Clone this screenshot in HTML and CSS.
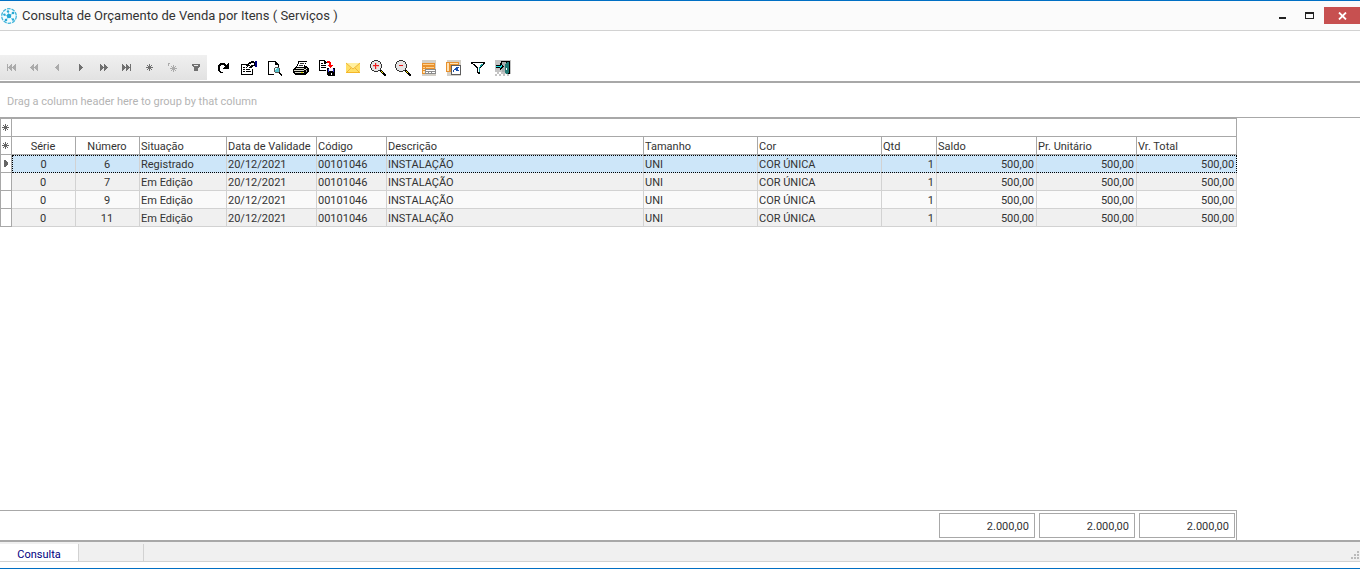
FILE: index.html
```html
<!DOCTYPE html>
<html lang="pt-BR">
<head>
<meta charset="UTF-8">
<meta name="viewport" content="width=device-width, initial-scale=1.0">
<title>Consulta de Orçamento de Venda por Itens ( Serviços )</title>
<link rel="stylesheet" href="styles.css">
</head>
<body>

<div class="window">
  <!-- Barra de título -->
  <header class="titlebar">
    <svg class="app-icon" viewBox="0 0 16 16" aria-hidden="true">
      <circle cx="8" cy="8" r="7.3" fill="#f3fcff" stroke="#3fb4da" stroke-width="1.3" stroke-dasharray="3.6 1"/>
      <path d="M8 8L7 3M8 8l4-3M8 8l4 4M8 8l-3 4M8 8L3 7" stroke="#8ed6ec" stroke-width="1"/>
      <g fill="#27a8d4">
        <circle cx="8" cy="8" r="2.3"/><circle cx="7" cy="3.4" r="1.2"/><circle cx="12" cy="5" r="1.3"/>
        <circle cx="12" cy="11.5" r="1.2"/><circle cx="5" cy="12" r="1.3"/><circle cx="3.4" cy="6.6" r="1.2"/>
      </g>
    </svg>
    <h1>Consulta de Orçamento de Venda por Itens ( Serviços )</h1>
    <div class="window-buttons">
      <button type="button" aria-label="Minimizar"><svg viewBox="0 0 9 8"><path d="M1 5h7v2H1z" fill="#222"/></svg></button>
      <button type="button" aria-label="Maximizar"><svg viewBox="0 0 9 8"><path d="M0 0h9v7H0zM1 2v4h7V2z" fill="#222" fill-rule="evenodd"/></svg></button>
      <button type="button" class="close-btn" aria-label="Fechar"><svg viewBox="0 0 9 8"><path d="M1 .5l7 7M8 .5l-7 7" stroke="#fff" stroke-width="1.8" shape-rendering="auto"/></svg></button>
    </div>
  </header>

  <!-- Barra de ferramentas -->
  <div class="toolbar">
    <div class="navigator">
      <button type="button" disabled aria-label="Primeiro"><svg viewBox="0 0 11 9"><path d="M1 1h1v7H1zM6 1v7L2 5V4zM10 1v7L6 5V4z"/></svg></button>
      <button type="button" disabled aria-label="Página anterior"><svg viewBox="0 0 11 9"><path d="M5 1v7L1 5V4zM9 1v7L5 5V4z"/></svg></button>
      <button type="button" disabled aria-label="Anterior"><svg viewBox="0 0 11 9"><path d="M7 1v7L3 5V4z"/></svg></button>
      <button type="button" aria-label="Próximo"><svg viewBox="0 0 11 9"><path d="M4 1v7l4-3V4z"/></svg></button>
      <button type="button" aria-label="Próxima página"><svg viewBox="0 0 11 9"><path d="M2 1v7l4-3V4zM6 1v7l4-3V4z"/></svg></button>
      <button type="button" aria-label="Último"><svg viewBox="0 0 11 9"><path d="M1 1v7l4-3V4zM5 1v7l4-3V4zM9 1h1v7H9z"/></svg></button>
      <button type="button" aria-label="Salvar marcador"><svg viewBox="0 0 11 9"><path d="M5 1h1v7H5zM2 4h7v1H2zM3 2h1v1h3V2h1v1H7v3h1v1H7V6H4v1H3V6h1V3H3z"/></svg></button>
      <button type="button" disabled aria-label="Ir para marcador"><svg viewBox="0 0 11 9"><path d="M1 0h2v1H2v2H1zM6 2h1v7H6zM3 5h7v1H3zM4 3h1v1h3V3h1v1H8v3h1v1H8V7H5v1H4V7h1V4H4z"/></svg></button>
      <button type="button" aria-label="Filtrar"><svg viewBox="0 0 11 9"><path d="M2 1h8v2L8 5v3H4V5L2 3zM4 2v1h4V2z" fill-rule="evenodd"/></svg></button>
    </div>

    <div class="tools">
      <button type="button" aria-label="Atualizar"><svg viewBox="0 0 16 16">
        <path d="M5 3h5v1h1v1h1V4h1V3h1v6H8V8h1V7h1V6H9V5H6v1H5v5h1v1h2v1H5v-1H4v-1H3V5h1V4h1z" fill="#000"/>
      </svg></button>
      <button type="button" aria-label="Propriedades"><svg viewBox="0 0 16 16">
        <path d="M0 4h7v1H1v9h10V9h1v6H0zM2 7h2v1H2zM2 9h2v1H2zM2 11h2v1H2zM5 11h5v1H5zM5 9h4v1H5zM5 7h1v1H5zM5 5h1V4h1V3h1V2h2V1h3v1h1v4h-2v1h-1v1H8V7h1V6H7v1H6V6H5z" fill="#000"/>
        <path d="M7 5h1V4h2V3h3v2h-3v1H9V5z" fill="#fff"/>
        <path d="M14 1h2v6h-2z" fill="#000080"/>
      </svg></button>
      <button type="button" aria-label="Visualizar"><svg viewBox="0 0 16 16">
        <path d="M1 1h8v1h1v1h1v1h1v3h-1V5H8V2H2v12h5v1H1z" fill="#000"/>
        <path d="M8 7h4v1h1v4h-1v1H8v-1H7V8h1z" fill="#555"/>
        <path d="M8 8h4v4H8z" fill="#56c5cc"/><path d="M9 8h1v1H9v1H8V8z" fill="#d9ffff"/>
        <path d="M12 12h1v1h1v1h1v2h-1v-1h-1v-1h-1z" fill="#000"/>
      </svg></button>
      <button type="button" aria-label="Imprimir"><svg viewBox="0 0 16 16">
        <path d="M5 1h9v1h-1v2h-1v2h2v1h1v1h1v4h-1v1h-1v1h-1v1H2v-1H1v-1H0V9h1V8h1V7h1V6h1V4h1z" fill="#000"/>
        <path d="M6 2h7v1h-1v2h-1v2H4V6h1V4h1z" fill="#fff"/>
        <path d="M7 3h4v1H7zM6 5h4v1H6z" fill="#333"/>
        <path d="M3 8h8v1H2v1h9V9h2V8h1v1h-1v1h-2v1H1v-1h1V9h1zM2 12h9v1H2z" fill="#d8d8c8"/>
        <path d="M8 12h2v1H8z" fill="#e5e500"/><path d="M13 10h1v2h-1z" fill="#aaa"/>
      </svg></button>
      <button type="button" aria-label="Exportar"><svg viewBox="0 0 16 16">
        <path d="M0 0h6v1h1v1h1v1H7v1H5V1H1v9h6v1H0zM2 3h2v1H2zM2 5h5v1H2zM2 7h5v1H2z" fill="#000"/>
        <path d="M8 1h3v1h1v3h2v1h-1v1h-1v1h-1V7h-1V6H9V5h1V3H8z" fill="#f00"/>
        <path d="M8 8h8v8H9v-1H8z" fill="#000"/><path d="M10 8h4v3h-4z" fill="#f4f4ff"/>
        <path d="M9 9h1v3H9zM14 9h1v3h-1z" fill="#2929d6"/><path d="M12 13h1v2h-1z" fill="#fff"/>
      </svg></button>
      <button type="button" aria-label="Enviar e-mail"><svg viewBox="0 0 16 16">
        <path d="M1 3h14v10H1z" fill="#ffdf66"/><path d="M1 3h14L8 9z" fill="#fff0a0"/>
        <path d="M1 3l7 6 7-6M1 13l5-5M15 13l-5-5" fill="none" stroke="#efb63a" shape-rendering="auto"/>
        <path d="M1 12h14v1H1z" fill="#f5b727"/>
      </svg></button>
    </div>

    <div class="tools tools-narrow">
      <button type="button" aria-label="Aumentar zoom"><svg viewBox="0 0 16 16">
        <path d="M4 0h4v1h2v1h1v2h1v4h-1v2h-1v1H8v1H4v-1H2v-1H1V8H0V4h1V2h1V1h2z" fill="#333"/>
        <path d="M4 1h4v1h2v2h1v4h-1v2H8v1H4v-1H2V8H1V4h1V2h2z" fill="#e4e4e4"/>
        <path d="M5 4h2v1h1v2H7v1H5V7H4V5h1zM3 5h6v2H3zM5 3h2v6H5z" fill="#f8b0b0"/>
        <path d="M5 3h1v6H5zM3 5h6v1H3z" fill="#e81c1c"/>
        <path d="M10 10h1l5 5v1h-2l-4-4z" fill="#000"/><path d="M11 11h1v1h1v1h-1v-1h-1z" fill="#ffe800"/>
      </svg></button>
      <button type="button" aria-label="Diminuir zoom"><svg viewBox="0 0 16 16">
        <path d="M4 0h4v1h2v1h1v2h1v4h-1v2h-1v1H8v1H4v-1H2v-1H1V8H0V4h1V2h1V1h2z" fill="#333"/>
        <path d="M4 1h4v1h2v2h1v4h-1v2H8v1H4v-1H2V8H1V4h1V2h2z" fill="#e4e4e4"/>
        <path d="M4 5h4v1H4z" fill="#e81c1c"/>
        <path d="M10 10h1l5 5v1h-2l-4-4z" fill="#000"/><path d="M11 11h1v1h1v1h-1v-1h-1z" fill="#ffe800"/>
      </svg></button>
      <button type="button" aria-label="Salvar layout"><svg viewBox="0 0 16 16">
        <path d="M2 0h14v16H2z" fill="#d4d0c8"/><path d="M2 3h13v6H2zM2 9h3v5H2z" fill="#e8912d"/>
        <path d="M3 4h11v1H3zM3 7h2v1H3zM6 7h8v1H6z" fill="#ffd08c"/><path d="M3 9h2v1H3zM3 11h2v2H3z" fill="#ffe2b5"/>
        <path d="M5 9h11v5H5z" fill="#8c8c8c"/><path d="M6 10h9v1H6zM6 12h2v1H6zM9 12h2v1H9zM12 12h3v1h-3z" fill="#fff"/>
      </svg></button>
      <button type="button" aria-label="Restaurar layout"><svg viewBox="0 0 16 16">
        <path d="M2 0h14v16H2z" fill="#d4d0c8"/><path d="M1 2h13v10H1z" fill="#e8912d"/>
        <path d="M2 3h2v8H2zM5 3h8v1H5z" fill="#ffe2b5"/>
        <path d="M6 5h10v10H6z" fill="#5d5d5d"/><path d="M7 6h8v8H7z" fill="#fff"/>
        <path d="M10 8h1V7h3v1h-1v2h1v1h-3v-1H9v2H8v-2h1V9h1z" fill="#164fae"/>
      </svg></button>
      <button type="button" aria-label="Filtro"><svg viewBox="0 0 16 16">
        <path d="M1 2h14v2h-1v1h-1v1h-1v1h-1v1h-1v6H8v-1H7V8H6V7H5V6H4V5H3V4H1z" fill="#000"/>
        <path d="M3 3h10v1h-1v1h-1v1h-1v1H9v5H8V7H7V6H6V5H5V4H3z" fill="#fff"/>
        <path d="M11 4h2v1h-1v1h-1v1h-1v5H9V7h1V5h1z" fill="#149c9c"/>
      </svg></button>
      <button type="button" aria-label="Sair"><svg viewBox="0 0 16 16">
        <path d="M0 0h16v16H0z" fill="#c4c4c4"/>
        <path d="M0 12h2v2H0zM4 12h2v2H4zM2 14h2v2H2zM6 14h2v2H6zM10 14h2v2h-2zM14 14h2v2h-2z" fill="#fff"/>
        <path d="M6 1h9v13h-3v-2h-1V2H7v2H6z" fill="#000"/><path d="M7 2h4v10H7z" fill="#a9b0b0"/>
        <path d="M10 4h1V3h1V2h2v11h-1v1h-2v-1h-1z" fill="#1f7974"/><path d="M11 8h1v2h-1z" fill="#fff"/>
        <path d="M1 5h4V3h1v1h1v1h1v1h1v1H8v1H7v1H6v1H5V8H1z" fill="#000"/>
        <path d="M1 6h5V5h1v2H6v1H5V7H1z" fill="#18e0e0"/>
      </svg></button>
    </div>
  </div>

  <div class="group-panel">Drag a column header here to group by that column</div>

  <!-- Grade de itens -->
  <main class="grid-area">
    <table class="grid">
      <colgroup>
        <col class="col-indicator"><col class="col-serie"><col class="col-numero"><col class="col-situacao">
        <col class="col-validade"><col class="col-codigo"><col class="col-descricao"><col class="col-tamanho">
        <col class="col-cor"><col class="col-qtd"><col class="col-valor"><col class="col-valor"><col class="col-valor">
      </colgroup>
      <thead>
        <tr>
          <th class="indicator"><svg viewBox="0 0 7 7"><path d="M3 0h1v7H3zM0 3h7v1H0zM1 1h1v1h3V1h1v1H5v3h1v1H5V5H2v1H1V5h1V2H1z"/></svg></th>
          <th colspan="12"></th>
        </tr>
        <tr>
          <th class="indicator"><svg viewBox="0 0 7 7"><path d="M3 0h1v7H3zM0 3h7v1H0zM1 1h1v1h3V1h1v1H5v3h1v1H5V5H2v1H1V5h1V2H1z"/></svg></th>
          <th class="center">Série</th>
          <th class="center">Número</th>
          <th>Situação</th>
          <th>Data de Validade</th>
          <th>Código</th>
          <th>Descrição</th>
          <th>Tamanho</th>
          <th>Cor</th>
          <th>Qtd</th>
          <th>Saldo</th>
          <th>Pr. Unitário</th>
          <th>Vr. Total</th>
        </tr>
      </thead>
      <tbody>
        <tr class="selected">
          <td class="indicator"><svg viewBox="0 0 7 7"><path d="M2 0h1l3 3v1L3 7H2z"/></svg></td>
          <td class="center">0</td><td class="center">6</td><td>Registrado</td><td>20/12/2021</td><td>00101046</td>
          <td>INSTALAÇÃO</td><td>UNI</td><td>COR ÚNICA</td>
          <td class="number">1</td><td class="number">500,00</td><td class="number">500,00</td><td class="number">500,00</td>
        </tr>
        <tr>
          <td class="indicator"></td>
          <td class="center">0</td><td class="center">7</td><td>Em Edição</td><td>20/12/2021</td><td>00101046</td>
          <td>INSTALAÇÃO</td><td>UNI</td><td>COR ÚNICA</td>
          <td class="number">1</td><td class="number">500,00</td><td class="number">500,00</td><td class="number">500,00</td>
        </tr>
        <tr>
          <td class="indicator"></td>
          <td class="center">0</td><td class="center">9</td><td>Em Edição</td><td>20/12/2021</td><td>00101046</td>
          <td>INSTALAÇÃO</td><td>UNI</td><td>COR ÚNICA</td>
          <td class="number">1</td><td class="number">500,00</td><td class="number">500,00</td><td class="number">500,00</td>
        </tr>
        <tr>
          <td class="indicator"></td>
          <td class="center">0</td><td class="center">11</td><td>Em Edição</td><td>20/12/2021</td><td>00101046</td>
          <td>INSTALAÇÃO</td><td>UNI</td><td>COR ÚNICA</td>
          <td class="number">1</td><td class="number">500,00</td><td class="number">500,00</td><td class="number">500,00</td>
        </tr>
      </tbody>
    </table>

    <div class="totals">
      <div class="total">2.000,00</div>
      <div class="total">2.000,00</div>
      <div class="total">2.000,00</div>
    </div>
  </main>

  <!-- Barra de status -->
  <footer class="statusbar">
    <button type="button" class="status-tab">Consulta</button>
    <div class="status-panel"></div>
    <svg class="grip" viewBox="0 0 8 8" aria-hidden="true"><path d="M6 0h2v2H6zM3 3h2v2H3zM6 3h2v2H6zM0 6h2v2H0zM3 6h2v2H3zM6 6h2v2H6z" fill="#bbb"/></svg>
  </footer>
</div>

</body>
</html>
```
FILE: styles.css
```css
* {
  box-sizing: border-box;
}

body {
  margin: 0;
  font-family: Roboto, "Noto Sans", sans-serif;
  font-size: 11px;
  line-height: 16px;
  color: #333;
  background: #fff;
}

h1 {
  margin: 0;
  font-size: 13px;
  font-weight: normal;
}

button {
  display: flex;
  align-items: center;
  justify-content: center;
  padding: 0;
  border: none;
  background: none;
  font: inherit;
}

svg {
  display: block;
  flex: none;
  shape-rendering: crispEdges;
}

.window {
  display: flex;
  flex-direction: column;
  min-height: 100vh;
  border-top: 1px solid #006fc4;
  border-bottom: 1px solid #006fc4;
}

/* Barra de título */
.titlebar {
  display: flex;
  align-items: center;
  height: 30px;
  padding-left: 1px;
  background: #fbfbfb;
  border-bottom: 1px solid #d2d2d2;
}

.app-icon {
  width: 16px;
  height: 16px;
  margin-right: 5px;
  shape-rendering: auto;
}

.window-buttons {
  display: flex;
  margin-left: auto;
}

.window-buttons button {
  width: 27px;
  height: 17px;
}

.window-buttons svg {
  width: 9px;
  height: 8px;
}

.window-buttons .close-btn {
  width: 36px;
  margin-left: 1px;
  background: #c75050;
}

/* Barra de ferramentas */
.toolbar {
  display: flex;
  padding: 24px 0 1px;
  border-bottom: 2px solid #a8a8a8;
}

.navigator {
  display: flex;
  margin-right: 3px;
  background: linear-gradient(#f0f0f0, #e2e2e2);
}

.navigator button {
  width: 23px;
  height: 25px;
}

.navigator svg {
  width: 11px;
  height: 9px;
  fill: #707070;
}

.navigator button:disabled svg {
  fill: #ababab;
}

.tools {
  display: flex;
}

.tools button {
  width: 26px;
  height: 25px;
}

.tools-narrow {
  margin-left: -1px;
}

.tools-narrow button {
  width: 25px;
}

.tools svg {
  width: 16px;
  height: 16px;
}

.group-panel {
  padding: 11px 7px 7px;
  color: #b4b4b4;
  border-bottom: 1px solid #a8a8a8;
}

/* Grade */
.grid-area {
  display: flex;
  flex: 1;
  flex-direction: column;
  align-items: flex-start;
  justify-content: space-between;
}

.grid {
  table-layout: fixed;
  width: 1237px;
  border-collapse: separate;
  border-spacing: 0;
  border-top: 1px solid #a8a8a8;
}

.col-indicator { width: 12px; }
.col-serie, .col-numero { width: 64px; }
.col-situacao { width: 87px; }
.col-validade { width: 90px; }
.col-codigo { width: 70px; }
.col-descricao { width: 257px; }
.col-tamanho { width: 114px; }
.col-cor { width: 124px; }
.col-qtd { width: 55px; }
.col-valor { width: 100px; }

.grid th, .grid td {
  height: 18px;
  padding: 3px 2px 0 1px;
  line-height: 14px;
  font-weight: normal;
  text-align: left;
  white-space: nowrap;
  border-right: 1px solid #d2d2d2;
  border-bottom: 1px solid #d2d2d2;
}

.grid th {
  border-color: #a8a8a8;
}

.grid tbody tr:nth-child(odd) {
  background: #fafafa;
}

.grid tbody tr:nth-child(even) {
  background: #f0f0f0;
}

.grid .center {
  text-align: center;
}

.grid .number {
  text-align: right;
}

.grid .indicator {
  padding: 0 2px 0 1px;
  background: #fff;
  border-left: 1px solid #a8a8a8;
  border-color: #a8a8a8;
}

.indicator svg {
  width: 7px;
  height: 7px;
  fill: #666;
}

.grid .selected td:not(.indicator) {
  padding-top: 2px;
  background: #cde6f9;
  border-top: 1px dotted #000;
  border-bottom: 1px dotted #000;
}

.grid .selected td:nth-child(2) {
  border-left: 1px dotted #000;
}

.grid .selected td:last-child {
  border-right: 1px dotted #000;
}

/* Totais */
.totals {
  display: flex;
  justify-content: flex-end;
  gap: 4px;
  width: 1237px;
  padding: 2px 1px 2px 0;
  border-top: 1px solid #a8a8a8;
  border-right: 1px solid #a8a8a8;
}

.total {
  width: 96px;
  padding: 5px 5px 2px;
  text-align: right;
  border: 1px solid #a8a8a8;
}

/* Barra de status */
.statusbar {
  display: flex;
  height: 22px;
  margin-bottom: 6px;
  padding-top: 2px;
  background: #f0f0f0;
  border-top: 2px solid #a8a8a8;
  border-bottom: 1px solid #d2d2d2;
}

.status-tab {
  width: 79px;
  padding-top: 4px;
  color: #000080;
  background: #fff;
  border-right: 1px solid #d2d2d2;
}

.status-panel {
  width: 65px;
  border-right: 1px solid #d2d2d2;
}

.grip {
  width: 8px;
  height: 8px;
  margin: auto 1px 2px auto;
}
```
